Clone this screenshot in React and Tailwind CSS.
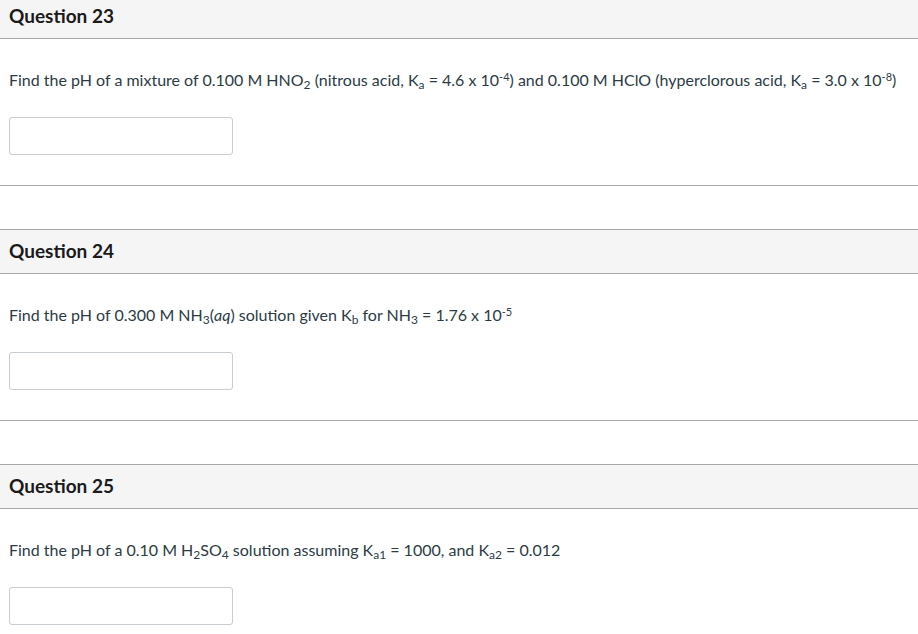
import React from 'react';

const Sub = ({ children }) => <sub className="text-[12px]">{children}</sub>;
const Sup = ({ children }) => <sup className="text-[11px]">{children}</sup>;

const questions = [
  {
    title: 'Question 23',
    body: (
      <>
        Find the pH of a mixture of 0.100 M HNO<Sub>2</Sub> (nitrous acid, K<Sub>a</Sub> = 4.6 x 10<Sup>-4</Sup>) and 0.100 M HClO
        (hyperclorous acid, K<Sub>a</Sub> = 3.0 x 10<Sup>-8</Sup>)
      </>
    ),
  },
  {
    title: 'Question 24',
    body: (
      <>
        Find the pH of 0.300 M NH<Sub>3</Sub>(<i>aq</i>) solution given K<Sub>b</Sub> for NH<Sub>3</Sub> = 1.76 x 10<Sup>-5</Sup>
      </>
    ),
  },
  {
    title: 'Question 25',
    body: (
      <>
        Find the pH of a 0.10 M H<Sub>2</Sub>SO<Sub>4</Sub> solution assuming K<Sub>a1</Sub> = 1000, and K<Sub>a2</Sub> = 0.012
      </>
    ),
  },
];

const Question = ({ title, body }) => (
  <div className="mb-[43px]">
    <div className="h-[45px] box-border border-y border-[#a8a8a8] bg-[#f5f5f5] flex items-center px-[9px]">
      <h2 className="text-[19px] font-bold text-[#1b1b1b]">{title}</h2>
    </div>
    <div className="px-[9px] pt-[31px] pb-[30px] border-b border-[#a8a8a8]">
      <p className="text-[16px] leading-[20px] text-[#2d3b45] whitespace-nowrap">{body}</p>
      <input
        type="text"
        className="block mt-[27px] w-[224px] h-[38px] box-border border border-[#c7cdd1] rounded-[3px] bg-white outline-none"
      />
    </div>
  </div>
);

export default function App() {
  return (
    <div className="w-[918px] h-[634px] overflow-hidden bg-white" style={{ fontFamily: 'Lato, "Open Sans", sans-serif' }}>
      <div className="-mt-[6px]">
        {questions.map((q) => (
          <Question key={q.title} {...q} />
        ))}
      </div>
    </div>
  );
}
